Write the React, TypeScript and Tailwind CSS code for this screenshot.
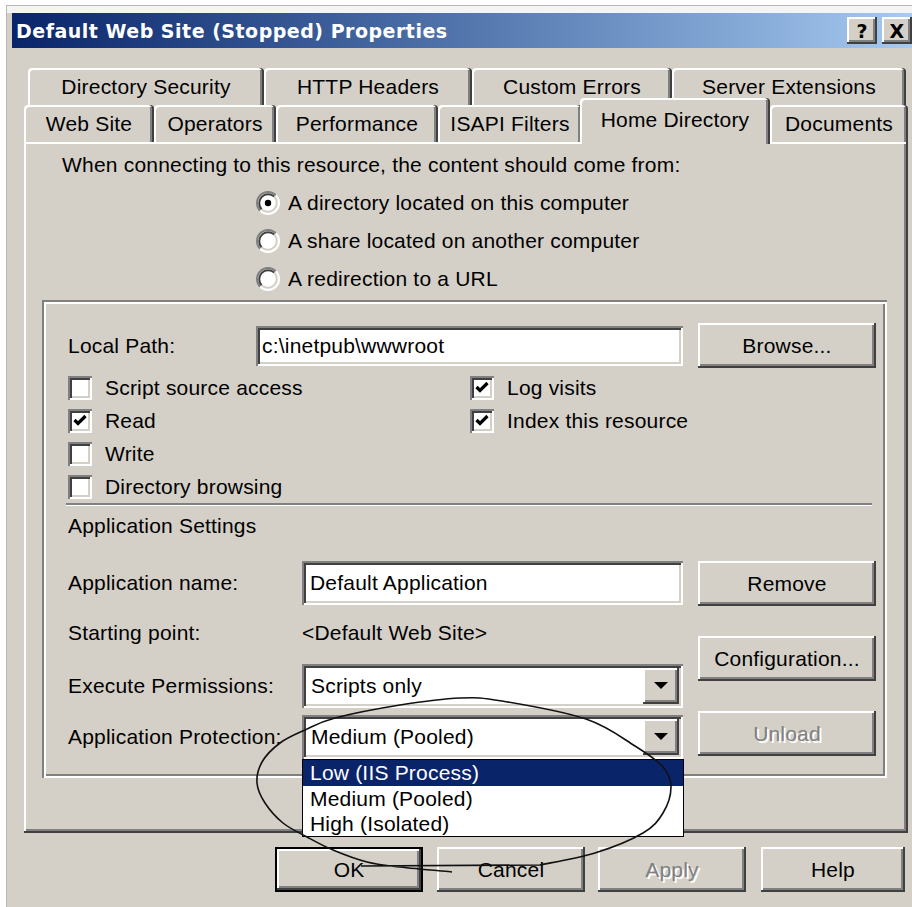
import React from "react";

// classic 3D bevels, drawn at 2px per edge
const raised =
  "shadow-[inset_-2px_-2px_0_#404040,inset_2px_2px_0_#ffffff,inset_-4px_-4px_0_#808080]";
const sunken =
  "shadow-[inset_2px_2px_0_#808080,inset_-2px_-2px_0_#ffffff,inset_4px_4px_0_#404040,inset_-4px_-4px_0_#d4d0c8]";
const etched =
  "shadow-[inset_2px_2px_0_#808080,inset_-2px_-2px_0_#ffffff,inset_4px_4px_0_#ffffff,inset_-4px_-4px_0_#808080]";

function Tab({ label, w, active }: { label: string; w: string; active?: boolean }) {
  if (active) {
    return (
      <div
        className={`${w} relative z-10 -ml-[2px] -mb-[2px] h-[46px] flex items-center justify-center pb-[2px] rounded-t-[4px] bg-[#d4d0c8] shadow-[inset_-2px_0_0_#404040,inset_2px_2px_0_#ffffff,inset_-4px_0_0_#808080]`}
      >
        {label}
      </div>
    );
  }
  return (
    <div
      className={`${w} h-[37px] flex items-center justify-center rounded-t-[4px] bg-[#d4d0c8] shadow-[inset_-2px_0_0_#404040,inset_2px_2px_0_#ffffff,inset_-4px_0_0_#808080]`}
    >
      {label}
    </div>
  );
}

function Button({
  label,
  className = "",
  disabled,
  primary,
}: {
  label: string;
  className?: string;
  disabled?: boolean;
  primary?: boolean;
}) {
  const inner = (
    <div
      className={`h-full w-full flex items-center justify-center bg-[#d4d0c8] ${raised} ${
        disabled ? "text-[#808080] [text-shadow:2px_2px_0_#ffffff]" : ""
      }`}
    >
      {label}
    </div>
  );
  if (primary) {
    return <div className={`${className} border-2 border-black`}>{inner}</div>;
  }
  return <div className={className}>{inner}</div>;
}

function CheckBox({ checked }: { checked?: boolean }) {
  return (
    <span className={`w-[24px] h-[24px] shrink-0 bg-white ${sunken} flex items-center justify-center`}>
      {checked && (
        <svg width="24" height="24" viewBox="0 0 24 24">
          <path d="M6.5 11 L10 14.5 L17.5 7" fill="none" stroke="#000" strokeWidth="3.2" />
        </svg>
      )}
    </span>
  );
}

function Radio({ checked }: { checked?: boolean }) {
  return (
    <svg width="24" height="24" viewBox="0 0 24 24" className="shrink-0">
      <circle cx="12" cy="12" r="10" fill="#ffffff" />
      <path d="M4.22 19.78 A11 11 0 0 1 19.78 4.22" fill="none" stroke="#808080" strokeWidth="2" />
      <path d="M19.78 4.22 A11 11 0 0 1 4.22 19.78" fill="none" stroke="#ffffff" strokeWidth="2" />
      <path d="M5.64 18.36 A9 9 0 0 1 18.36 5.64" fill="none" stroke="#404040" strokeWidth="2" />
      <path d="M18.36 5.64 A9 9 0 0 1 5.64 18.36" fill="none" stroke="#d4d0c8" strokeWidth="2" />
      {checked && <circle cx="12" cy="12" r="3.2" fill="#000" />}
    </svg>
  );
}

function Check({ label, checked }: { label: string; checked?: boolean }) {
  return (
    <div className="h-[33px] flex items-center gap-[13px]">
      <CheckBox checked={checked} />
      <span>{label}</span>
    </div>
  );
}

function Combo({ value, children }: { value: string; children?: React.ReactNode }) {
  return (
    <div className={`relative w-[381px] h-[44px] bg-white ${sunken} flex items-center`}>
      <span className="pl-[9px]">{value}</span>
      <div className={`ml-auto mr-[4px] w-[36px] h-[36px] bg-[#d4d0c8] ${raised} flex items-center justify-center`}>
        <svg width="14" height="8" viewBox="0 0 14 8">
          <polygon points="0,0 14,0 7,7" fill="#000" />
        </svg>
      </div>
      {children}
    </div>
  );
}

// catmull-rom through the points, emitted as cubic segments
function smoothPath(pts: [number, number][]) {
  let d = `M${pts[0][0]},${pts[0][1]}`;
  for (let i = 0; i < pts.length - 1; i++) {
    const p0 = pts[i - 1] ?? pts[i];
    const p1 = pts[i];
    const p2 = pts[i + 1];
    const p3 = pts[i + 2] ?? p2;
    const c1x = p1[0] + (p2[0] - p0[0]) / 6;
    const c1y = p1[1] + (p2[1] - p0[1]) / 6;
    const c2x = p2[0] - (p3[0] - p1[0]) / 6;
    const c2y = p2[1] - (p3[1] - p1[1]) / 6;
    d += ` C${c1x},${c1y} ${c2x},${c2y} ${p2[0]},${p2[1]}`;
  }
  return d;
}

const loop: [number, number][] = [
  [452, 872], [400, 867], [367, 862], [333, 850], [307, 837], [283, 823],
  [265, 803], [257, 783], [262, 762], [280, 743], [305, 730], [335, 718],
  [400, 705], [460, 698], [502, 701], [586, 719], [635, 746], [663, 767],
  [671, 787], [663, 813], [643, 833], [595, 853], [540, 865],
];

export default function App() {
  return (
    <div className="relative w-[912px] h-[907px] overflow-hidden bg-white text-black text-[21px] leading-[24px] tracking-[0.2px] font-['Liberation_Sans',Arial,sans-serif]">
      <div className="h-[5px]" />
      <div className="ml-[6px] h-[902px] bg-[#d4d0c8] border-t border-l border-[#b8b8b8]">
        {/* window frame strip above the caption */}
        <div className="h-[7px] bg-[#f4f4f4]" />
        <div className="pl-[5px]">
          {/* caption bar */}
          <div className="h-[35px] flex items-center bg-gradient-to-r from-[#0a246a] to-[#a6caf0]">
            <span className="pl-[4px] text-white font-bold text-[19px] tracking-[0.5px] font-['DejaVu_Sans',sans-serif]">
              Default Web Site (Stopped) Properties
            </span>
            <div className="ml-auto flex gap-[5px] self-start mt-[4px]">
              <div className={`w-[30px] h-[27px] bg-[#d4d0c8] ${raised} flex items-center justify-center font-bold text-[19px] font-['DejaVu_Sans',sans-serif]`}>
                ?
              </div>
              <div className={`w-[30px] h-[27px] bg-[#d4d0c8] ${raised} flex items-center justify-center font-bold text-[19px] font-['DejaVu_Sans',sans-serif]`}>
                X
              </div>
            </div>
          </div>

          {/* tab strip */}
          <div className="mt-[20px] pl-[16px] flex">
            <Tab label="Directory Security" w="w-[236px]" />
            <Tab label="HTTP Headers" w="w-[208px]" />
            <Tab label="Custom Errors" w="w-[200px]" />
            <Tab label="Server Extensions" w="w-[234px]" />
          </div>
          <div className="pl-[12px] flex items-end h-[37px]">
            <Tab label="Web Site" w="w-[130px]" />
            <Tab label="Operators" w="w-[122px]" />
            <Tab label="Performance" w="w-[162px]" />
            <Tab label="ISAPI Filters" w="w-[144px]" />
            <Tab label="Home Directory" w="w-[190px]" active />
            <Tab label="Documents" w="w-[138px]" />
          </div>

          {/* page body */}
          <div className={`ml-[12px] w-[884px] h-[691px] bg-[#d4d0c8] ${raised} flex flex-col`}>
            <div className="mt-[11px] ml-[38px]">
              When connecting to this resource, the content should come from:
            </div>
            <div className="mt-[7px] ml-[232px] flex flex-col">
              <div className="h-[38px] flex items-center gap-[8px]">
                <Radio checked />
                <span>A directory located on this computer</span>
              </div>
              <div className="h-[38px] flex items-center gap-[8px]">
                <Radio />
                <span>A share located on another computer</span>
              </div>
              <div className="h-[38px] flex items-center gap-[8px]">
                <Radio />
                <span>A redirection to a URL</span>
              </div>
            </div>

            <div className={`mt-[2px] ml-[18px] w-[845px] h-[478px] ${etched} flex flex-col pl-[26px]`}>
              <div className="mt-[23px] h-[45px] flex items-center">
                <span className="w-[188px]">Local Path:</span>
                <div className={`w-[427px] h-[40px] bg-white ${sunken} flex items-center pl-[6px]`}>
                  c:\inetpub\wwwroot
                </div>
                <Button label="Browse..." className="ml-[15px] w-[178px] h-[45px]" />
              </div>

              <div className="mt-[3px] flex">
                <div className="w-[402px] flex flex-col">
                  <Check label="Script source access" />
                  <Check label="Read" checked />
                  <Check label="Write" />
                  <Check label="Directory browsing" />
                </div>
                <div className="flex flex-col">
                  <Check label="Log visits" checked />
                  <Check label="Index this resource" checked />
                </div>
              </div>

              <div className="-ml-[2px] w-[806px] h-[3px] border-t-2 border-b border-t-[#808080] border-b-white" />

              <div className="mt-[8px]">Application Settings</div>

              <div className="mt-[23px] flex">
                <div className="w-[615px] flex flex-col">
                  <div className="h-[44px] flex items-center">
                    <span className="w-[234px]">Application name:</span>
                    <div className={`w-[381px] h-[44px] bg-white ${sunken} flex items-center pl-[8px]`}>
                      Default Application
                    </div>
                  </div>
                  <div className="mt-[6px] h-[44px] flex items-center">
                    <span className="w-[234px]">Starting point:</span>
                    <span>&lt;Default Web Site&gt;</span>
                  </div>
                  <div className="mt-[9px] h-[44px] flex items-center">
                    <span className="w-[234px]">Execute Permissions:</span>
                    <Combo value="Scripts only" />
                  </div>
                  <div className="mt-[7px] h-[44px] flex items-center relative z-20">
                    <span className="w-[234px]">Application Protection:</span>
                    <Combo value="Medium (Pooled)">
                      <div className="absolute left-0 top-full w-[382px] bg-white border border-black flex flex-col">
                        <div className="h-[26px] flex items-center pl-[7px] bg-[#0a246a] text-white">
                          Low (IIS Process)
                        </div>
                        <div className="h-[25px] flex items-center pl-[7px]">Medium (Pooled)</div>
                        <div className="h-[25px] flex items-center pl-[7px]">High (Isolated)</div>
                      </div>
                    </Combo>
                  </div>
                </div>
                <div className="ml-[15px] flex flex-col">
                  <Button label="Remove" className="w-[178px] h-[45px]" />
                  <Button label="Configuration..." className="mt-[30px] w-[178px] h-[45px]" />
                  <Button label="Unload" className="mt-[30px] w-[178px] h-[45px]" disabled />
                </div>
              </div>
            </div>
          </div>

          {/* dialog buttons */}
          <div className="mt-[14px] flex">
            <Button label="OK" className="ml-[263px] w-[148px] h-[45px]" primary />
            <Button label="Cancel" className="ml-[14px] w-[148px] h-[45px]" />
            <Button label="Apply" className="ml-[13px] w-[148px] h-[45px]" disabled />
            <Button label="Help" className="ml-[15px] w-[144px] h-[45px]" />
          </div>
        </div>
      </div>

      {/* pen loop around the protection list */}
      <svg
        className="absolute left-0 top-0 pointer-events-none z-30"
        width="912"
        height="907"
        viewBox="0 0 912 907"
      >
        <path
          d={`${smoothPath(loop)} L361,866`}
          fill="none"
          stroke="#111"
          strokeWidth="1.6"
          strokeLinejoin="round"
        />
      </svg>
    </div>
  );
}
